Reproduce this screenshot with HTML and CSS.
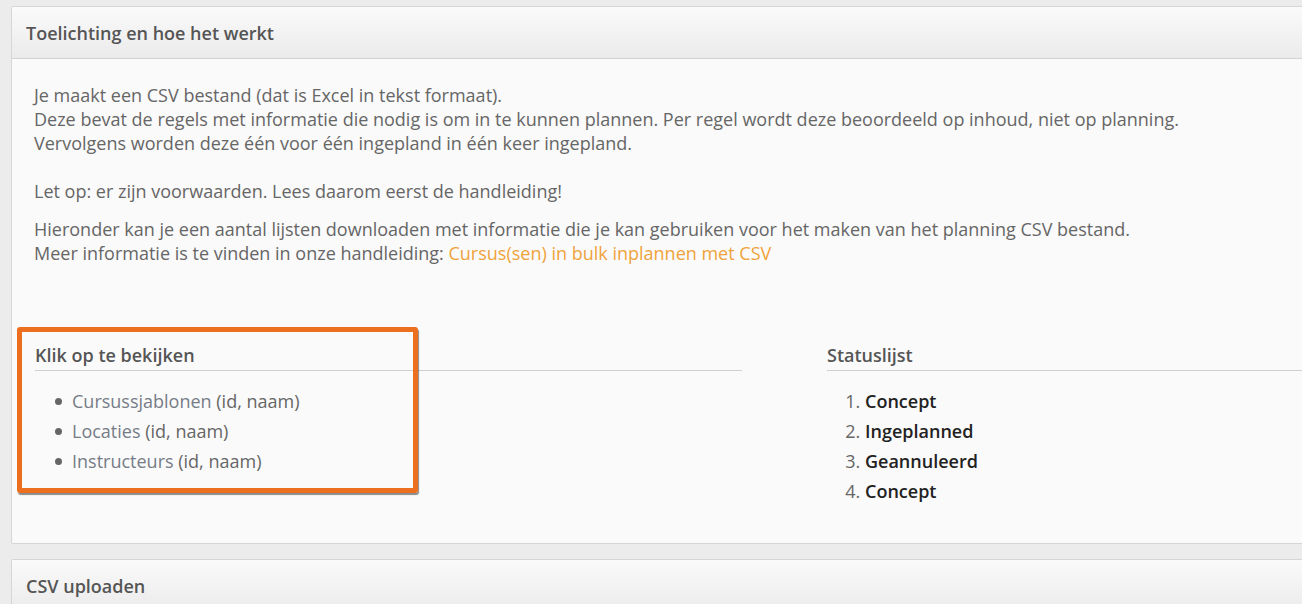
FILE: index.html
```html
<!DOCTYPE html>
<html lang="nl">
<head>
<meta charset="utf-8">
<title>Cursussen in bulk inplannen</title>
<link rel="stylesheet" href="styles.css">
</head>
<body>
<div class="page">
  <section class="panel">
    <div class="panel-heading">Toelichting en hoe het werkt</div>
    <div class="panel-body">
      <p class="intro">Je maakt een CSV bestand (dat is Excel in tekst formaat).<br>
      Deze bevat de regels met informatie die nodig is om in te kunnen plannen. Per regel wordt deze beoordeeld op inhoud, niet op planning.<br>
      Vervolgens worden deze één voor één ingepland in één keer ingepland.<br>
      <br>
      Let op: er zijn voorwaarden. Lees daarom eerst de handleiding!</p>
      <p class="intro">Hieronder kan je een aantal lijsten downloaden met informatie die je kan gebruiken voor het maken van het planning CSV bestand.<br>
      Meer informatie is te vinden in onze handleiding: <a class="orange-link" href="#">Cursus(sen) in bulk inplannen met CSV</a></p>

      <div class="columns">
        <div class="col col-left">
          <div class="highlight"></div>
          <h4 class="col-title">Klik op te bekijken</h4>
          <ul class="dl-list">
            <li><a href="#">Cursussjablonen</a> (id, naam)</li>
            <li><a href="#">Locaties</a> (id, naam)</li>
            <li><a href="#">Instructeurs</a> (id, naam)</li>
          </ul>
        </div>
        <div class="col col-right">
          <h4 class="col-title">Statuslijst</h4>
          <ol class="status-list">
            <li><strong>Concept</strong></li>
            <li><strong>Ingeplanned</strong></li>
            <li><strong>Geannuleerd</strong></li>
            <li><strong>Concept</strong></li>
          </ol>
        </div>
      </div>
    </div>
  </section>
  <section class="panel">
    <div class="panel-heading">CSV uploaden</div>
    <div class="panel-body short"></div>
  </section>
</div>
</body>
</html>
```
FILE: styles.css
```css
html, body {
  margin: 0;
  padding: 0;
  overflow: hidden;
  background: #ececec;
}
body {
  font-family: "Open Sans", "Noto Sans", "DejaVu Sans", sans-serif;
  font-size: 18px;
  line-height: 24px;
  color: #666;
}
.page {
  padding: 6px 0 0 11px;
  margin-right: -40px;
}
.panel {
  background: #fafafa;
  border: 1px solid #d6d6d6;
  border-radius: 2px;
  margin-bottom: 15px;
}
.panel-heading {
  padding: 14px 14px 13px;
  font-weight: 600;
  color: #555;
  background: linear-gradient(#fafafa, #ebebeb);
  border-bottom: 1px solid #d4d4d4;
}
.panel-body {
  padding: 24px 22px 37px;
}
.panel-body.short {
  padding: 40px 22px;
}
.intro {
  margin: 0 0 14px;
}
.orange-link {
  color: #efa33a;
  text-decoration: none;
}
.columns {
  display: grid;
  grid-template-columns: 707px 1fr;
  column-gap: 85px;
  margin-top: 78px;
  padding-left: 1px;
}
.col {
  position: relative;
}
.col-title {
  margin: 0;
  font-size: 18px;
  line-height: 24px;
  font-weight: 600;
  color: #555;
  padding-bottom: 3px;
  border-bottom: 1px solid #d0d0d0;
}
.dl-list {
  list-style: none;
  margin: 15px 0 0;
  padding: 0 0 0 37px;
}
.dl-list li {
  position: relative;
  line-height: 30px;
  color: #666;
}
.dl-list li::before {
  content: "";
  position: absolute;
  left: -17px;
  top: 12px;
  width: 7px;
  height: 7px;
  border-radius: 50%;
  background: #666;
}
.dl-list a {
  color: #767c87;
  text-decoration: none;
}
.status-list {
  margin: 15px 0 0;
  padding: 0 0 0 38px;
  color: #666;
}
.status-list li {
  line-height: 30px;
}
.status-list strong {
  font-weight: 600;
  color: #222;
}
.highlight {
  position: absolute;
  left: -18px;
  top: -16px;
  width: 391px;
  height: 156px;
  border: 5px solid #ec6f1f;
  border-radius: 3px;
  box-shadow: 1px 2px 1px rgba(0, 0, 0, 0.45);
  pointer-events: none;
}
```
